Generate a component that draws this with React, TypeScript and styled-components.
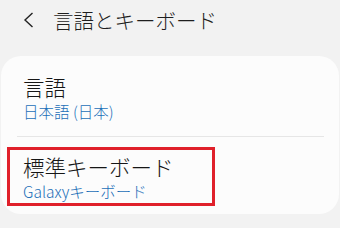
import React from 'react'
import styled, { createGlobalStyle } from 'styled-components'

const GlobalStyle = createGlobalStyle`
    body {
        margin: 0;
        background: #f2f2f2;
        font-family: "Noto Sans CJK JP", "Noto Sans", sans-serif;
    }
`

const Page = styled.div`
    width: 340px;
    height: 228px;
    overflow: hidden;
`

const Header = styled.header`
    display: flex;
    align-items: center;
    height: 40px;
    padding-left: 23px;
    gap: 19px;
`

const Back = styled.svg`
    width: 11px;
    height: 16px;
    color: #222;
`

const Title = styled.h1`
    margin: 0;
    font-size: 20.5px;
    font-weight: 300;
    color: #1e1e1e;
    line-height: 26px;
`

const Card = styled.section`
    margin: 16px 1px 0;
    background: #fcfcfc;
    border-radius: 20px;
    padding-bottom: 8px;
`

const Row = styled.div`
    margin: 0 15px 0 16px;
    padding: 17px 0 15px 6px;
    border-bottom: 1px solid #e6e6e6;
`

const Highlight = styled.div`
    display: inline-block;
    margin: 10px 0 0 6px;
    border: 3px solid #e0202a;
    padding: 3px 38px 2px 13px;
`

const Label = styled.div`
    font-size: 21.5px;
    font-weight: 300;
    line-height: 28px;
    color: #161616;
`

const Sub = styled.div`
    font-size: 15.5px;
    font-weight: 300;
    line-height: 20px;
    color: #1b6fb8;
`

function App() {
    return (
        <Page>
            <GlobalStyle />
            <Header>
                <Back viewBox="0 0 11 16" fill="none">
                    <path d="M9.5 1 L2 8 L9.5 15" stroke="currentColor" strokeWidth="1.4" />
                </Back>
                <Title>言語とキーボード</Title>
            </Header>
            <Card>
                <Row>
                    <Label>言語</Label>
                    <Sub>日本語 (日本)</Sub>
                </Row>
                <Highlight>
                    <Label>標準キーボード</Label>
                    <Sub>Galaxyキーボード</Sub>
                </Highlight>
            </Card>
        </Page>
    )
}

export default App
